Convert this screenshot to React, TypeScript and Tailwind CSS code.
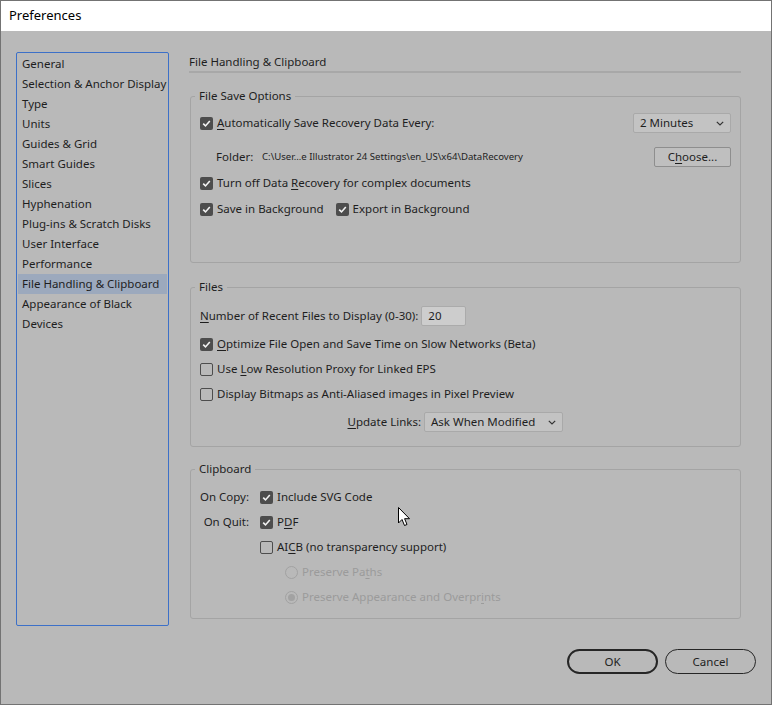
import type { ReactNode } from 'react';

const font = { fontFamily: '"Noto Sans", "Liberation Sans", sans-serif' };

const navItems = [
  'General',
  'Selection & Anchor Display',
  'Type',
  'Units',
  'Guides & Grid',
  'Smart Guides',
  'Slices',
  'Hyphenation',
  'Plug-ins & Scratch Disks',
  'User Interface',
  'Performance',
  'File Handling & Clipboard',
  'Appearance of Black',
  'Devices',
];

function U({ children }: { children: ReactNode }) {
  return <span className="underline decoration-1 underline-offset-2">{children}</span>;
}

function Check({ checked }: { checked?: boolean }) {
  if (checked) {
    return (
      <span className="flex h-[13px] w-[13px] shrink-0 items-center justify-center rounded-[2px] bg-[#4d4d4d]">
        <svg width="9" height="9" viewBox="0 0 9 9" fill="none">
          <path d="M1.2 4.6 L3.5 6.9 L7.8 1.9" stroke="#f2f2f2" strokeWidth="1.6" />
        </svg>
      </span>
    );
  }
  return <span className="h-[13px] w-[13px] shrink-0 rounded-[2px] border border-[#4d4d4d]" />;
}

function CheckRow({ checked, children }: { checked?: boolean; children: ReactNode }) {
  return (
    <div className="flex h-[20px] items-center gap-[4px] whitespace-nowrap">
      <Check checked={checked} />
      <span>{children}</span>
    </div>
  );
}

function Radio({ selected, children }: { selected?: boolean; children: ReactNode }) {
  return (
    <div className="flex h-[20px] items-center gap-[4px] whitespace-nowrap text-[#9b9b9b]">
      <span className="flex h-[13px] w-[13px] shrink-0 items-center justify-center rounded-full border border-[#a2a2a2]">
        {selected && <span className="h-[7px] w-[7px] rounded-full bg-[#a2a2a2]" />}
      </span>
      <span>{children}</span>
    </div>
  );
}

function Chevron() {
  return (
    <svg width="8" height="5" viewBox="0 0 8 5" fill="none">
      <path d="M0.8 0.8 L4 4 L7.2 0.8" stroke="#333" strokeWidth="1.2" />
    </svg>
  );
}

function Group({
  title,
  className,
  children,
}: {
  title: string;
  className: string;
  children: ReactNode;
}) {
  return (
    <fieldset className={`rounded-[3px] border border-[#a4a4a4] px-[9px] ${className}`}>
      <legend className="ml-[-5px] px-[4px] leading-[18px]">{title}</legend>
      {children}
    </fieldset>
  );
}

export default function App() {
  return (
    <div
      style={font}
      className="relative flex h-[705px] w-[772px] flex-col border border-[#737373] bg-[#b9b9b9] text-[11.5px] text-[#1e1e1e]"
    >
      <div className="flex h-[30px] items-center bg-white px-[8px] text-[13px] text-black">
        Preferences
      </div>

      <div className="mt-[21px] flex h-[574px] pl-[15px]">
        <ul className="h-full w-[153px] rounded-[2px] border border-[#3c70c8] p-px">
          {navItems.map((item) => (
            <li
              key={item}
              className={`flex h-[20px] items-center whitespace-nowrap px-[4px] ${
                item === 'File Handling & Clipboard' ? 'bg-[#9ca9bd]' : ''
              }`}
            >
              {item}
            </li>
          ))}
        </ul>

        <div className="ml-[20px] flex w-[552px] flex-col">
          <div className="flex h-[21px] items-center border-b-2 border-[#a8a8a8] pb-[2px] pt-[2px]">
            File Handling &amp; Clipboard
          </div>

          <Group title="File Save Options" className="ml-px mt-[14px] h-[176px] w-[551px]">
            <div className="mt-[8px] flex h-[20px] items-center justify-between">
              <CheckRow checked>
                <U>A</U>utomatically Save Recovery Data Every:
              </CheckRow>
              <div className="flex h-[20px] w-[98px] items-center justify-between rounded-[2px] border border-[#a9a9a9] bg-[#c3c3c3] pl-[6px] pr-[6px]">
                <span>2 Minutes</span>
                <Chevron />
              </div>
            </div>
            <div className="mt-[14px] flex h-[20px] items-center justify-between">
              <div className="flex items-center whitespace-nowrap pl-[16px]">
                <span className="w-[46px]">Folder:</span>
                <span className="text-[9.6px]">
                  C:\User...e Illustrator 24 Settings\en_US\x64\DataRecovery
                </span>
              </div>
              <div className="flex h-[20px] w-[77px] items-center justify-center rounded-[2px] border border-[#8e8e8e] bg-[#bfbfbf]">
                C<U>h</U>oose...
              </div>
            </div>
            <div className="mt-[6px]">
              <CheckRow checked>
                Turn off Data <U>R</U>ecovery for complex documents
              </CheckRow>
            </div>
            <div className="mt-[6px] flex items-center gap-[12px]">
              <CheckRow checked>Save in Background</CheckRow>
              <CheckRow checked>Export in Background</CheckRow>
            </div>
          </Group>

          <Group title="Files" className="ml-px mt-[15px] h-[169px] w-[551px]">
            <div className="mt-[10px] flex h-[20px] items-center gap-[3px] whitespace-nowrap">
              <span>
                <U>N</U>umber of Recent Files to Display (0-30):
              </span>
              <span className="flex h-[20px] w-[45px] items-center rounded-[2px] border border-[#ababab] bg-[#cdcdcd] px-[6px]">
                20
              </span>
            </div>
            <div className="mt-[8px]">
              <CheckRow checked>
                <U>O</U>ptimize File Open and Save Time on Slow Networks (Beta)
              </CheckRow>
            </div>
            <div className="mt-[5px]">
              <CheckRow>
                Use <U>L</U>ow Resolution Proxy for Linked EPS
              </CheckRow>
            </div>
            <div className="mt-[5px]">
              <CheckRow>Display Bitmaps as Anti-Aliased images in Pixel Preview</CheckRow>
            </div>
            <div className="mt-[8px] flex h-[20px] items-center justify-end gap-[3px] whitespace-nowrap pr-[168px]">
              <span>
                <U>U</U>pdate Links:
              </span>
              <span className="flex h-[20px] w-[139px] items-center justify-between rounded-[2px] border border-[#a9a9a9] bg-[#c3c3c3] px-[6px]">
                <span>Ask When Modified</span>
                <Chevron />
              </span>
            </div>
          </Group>

          <Group title="Clipboard" className="ml-px mt-[13px] h-[159px] w-[551px]">
            <div className="mt-[9px] grid grid-cols-[49px_1fr] gap-x-[11px] gap-y-[5px]">
              <div className="flex h-[20px] items-center justify-end whitespace-nowrap">On Copy:</div>
              <CheckRow checked>Include SVG Code</CheckRow>
              <div className="flex h-[20px] items-center justify-end whitespace-nowrap">On Quit:</div>
              <div className="flex flex-col gap-[5px]">
                <CheckRow checked>
                  P<U>D</U>F
                </CheckRow>
                <CheckRow>
                  AI<U>C</U>B (no transparency support)
                </CheckRow>
                <div className="flex flex-col gap-[5px] pl-[25px]">
                  <Radio>
                    Preserve Pa<U>t</U>hs
                  </Radio>
                  <Radio selected>
                    Preserve Appearance and Overpr<U>i</U>nts
                  </Radio>
                </div>
              </div>
            </div>
          </Group>
        </div>
      </div>

      <div className="mt-[23px] flex justify-end gap-[7px] pr-[15px]">
        <button className="h-[25px] w-[91px] rounded-full border-2 border-[#262626]">OK</button>
        <button className="h-[25px] w-[91px] rounded-full border border-[#262626]">Cancel</button>
      </div>

      <svg
        className="absolute left-[397px] top-[506px]"
        width="13"
        height="20"
        viewBox="0 0 13 20"
      >
        <path
          d="M0.5 0.5 L0.5 16 L4 12.5 L6.5 18.5 L9 17.5 L6.6 11.7 L11.5 11.7 Z"
          fill="#fff"
          stroke="#000"
          strokeWidth="1"
          strokeLinejoin="round"
        />
      </svg>
    </div>
  );
}
